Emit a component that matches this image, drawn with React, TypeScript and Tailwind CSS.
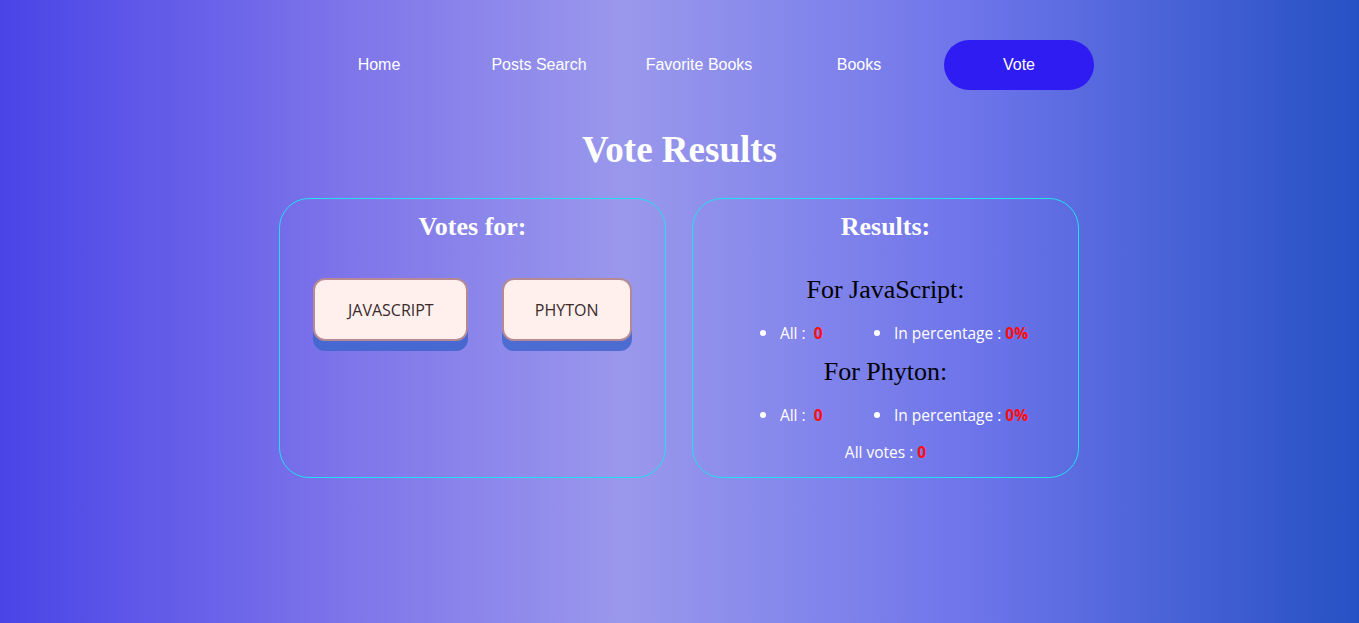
import React from 'react'

const links = ['Home', 'Posts Search', 'Favorite Books', 'Books', 'Vote']

function Row() {
  return (
    <ul className="flex pl-[17px] leading-[20px]">
      <li className="w-[114px] flex items-center gap-[14px]">
        <span className="w-[6px] h-[6px] rounded-full bg-white" />
        <span>
          All :&nbsp; <b className="text-[#ff0d0d] font-bold">0</b>
        </span>
      </li>
      <li className="flex items-center gap-[14px]">
        <span className="w-[6px] h-[6px] rounded-full bg-white" />
        <span>
          In percentage : <b className="text-[#ff0d0d] font-bold">0%</b>
        </span>
      </li>
    </ul>
  )
}

export default function App() {
  return (
    <div
      className="w-full h-[623px] overflow-hidden bg-[linear-gradient(90deg,#4a44e7_0%,#7d74ea_25%,#9a98ec_46%,#6d74ea_72%,#2651c4_100%)]"
      style={{ fontFamily: '"Open Sans", "Noto Sans", sans-serif' }}
    >
      {/* Navigation */}
      <nav className="pt-[40px] flex justify-center mr-[1px]">
        <ul className="flex gap-[10px] pl-[40px]" style={{ fontFamily: '"Liberation Sans", Arial, sans-serif' }}>
          {links.map(l => (
            <li
              key={l}
              className={
                'w-[150px] h-[50px] flex items-center justify-center text-white text-[16px] rounded-full ' +
                (l === 'Vote' ? 'bg-[#2e1cf3]' : '')
              }
            >
              {l}
            </li>
          ))}
        </ul>
      </nav>

      <h1
        className="mt-[38px] text-center text-white text-[37px] font-bold leading-[44px]"
        style={{ fontFamily: '"Liberation Serif", serif' }}
      >
        Vote Results
      </h1>

      <div className="mt-[26px] mr-[1px] flex justify-center gap-[26px]">
        {/* Votes */}
        <div className="w-[387px] h-[280px] rounded-[30px] border border-[#22e0f0] flex flex-col">
          <h2
            className="mt-[12px] text-center text-white text-[26px] font-bold leading-[32px]"
            style={{ fontFamily: '"Liberation Serif", serif' }}
          >
            Votes for:
          </h2>
          <div className="mt-[35px] flex justify-evenly items-start">
            <button className="w-[155px] h-[63px] rounded-[12px] border-2 border-[#b58a95] bg-[#fff0ee] text-[#3a2a2a] text-[16px] shadow-[0_10px_0_#4668d0]">
              JAVASCRIPT
            </button>
            <button className="w-[130px] h-[63px] rounded-[12px] border-2 border-[#b58a95] bg-[#fff0ee] text-[#3a2a2a] text-[16px] shadow-[0_10px_0_#4c6cd2]">
              PHYTON
            </button>
          </div>
        </div>

        {/* Results */}
        <div className="w-[387px] h-[280px] rounded-[30px] border border-[#22e0f0] flex flex-col items-center text-white text-[15.5px]">
          <h2
            className="mt-[12px] text-center text-white text-[26px] font-bold leading-[32px]"
            style={{ fontFamily: '"Liberation Serif", serif' }}
          >
            Results:
          </h2>
          <h3
            className="mt-[32px] text-black text-[26px] leading-[30px]"
            style={{ fontFamily: '"Liberation Serif", serif' }}
          >
            For JavaScript:
          </h3>
          <div className="mt-[18px]">
            <Row />
          </div>
          <h3
            className="mt-[14px] text-black text-[26px] leading-[30px]"
            style={{ fontFamily: '"Liberation Serif", serif' }}
          >
            For Phyton:
          </h3>
          <div className="mt-[18px]">
            <Row />
          </div>
          <p className="mt-[17px] leading-[20px]">
            All votes : <b className="text-[#ff0d0d] font-bold">0</b>
          </p>
        </div>
      </div>
    </div>
  )
}
